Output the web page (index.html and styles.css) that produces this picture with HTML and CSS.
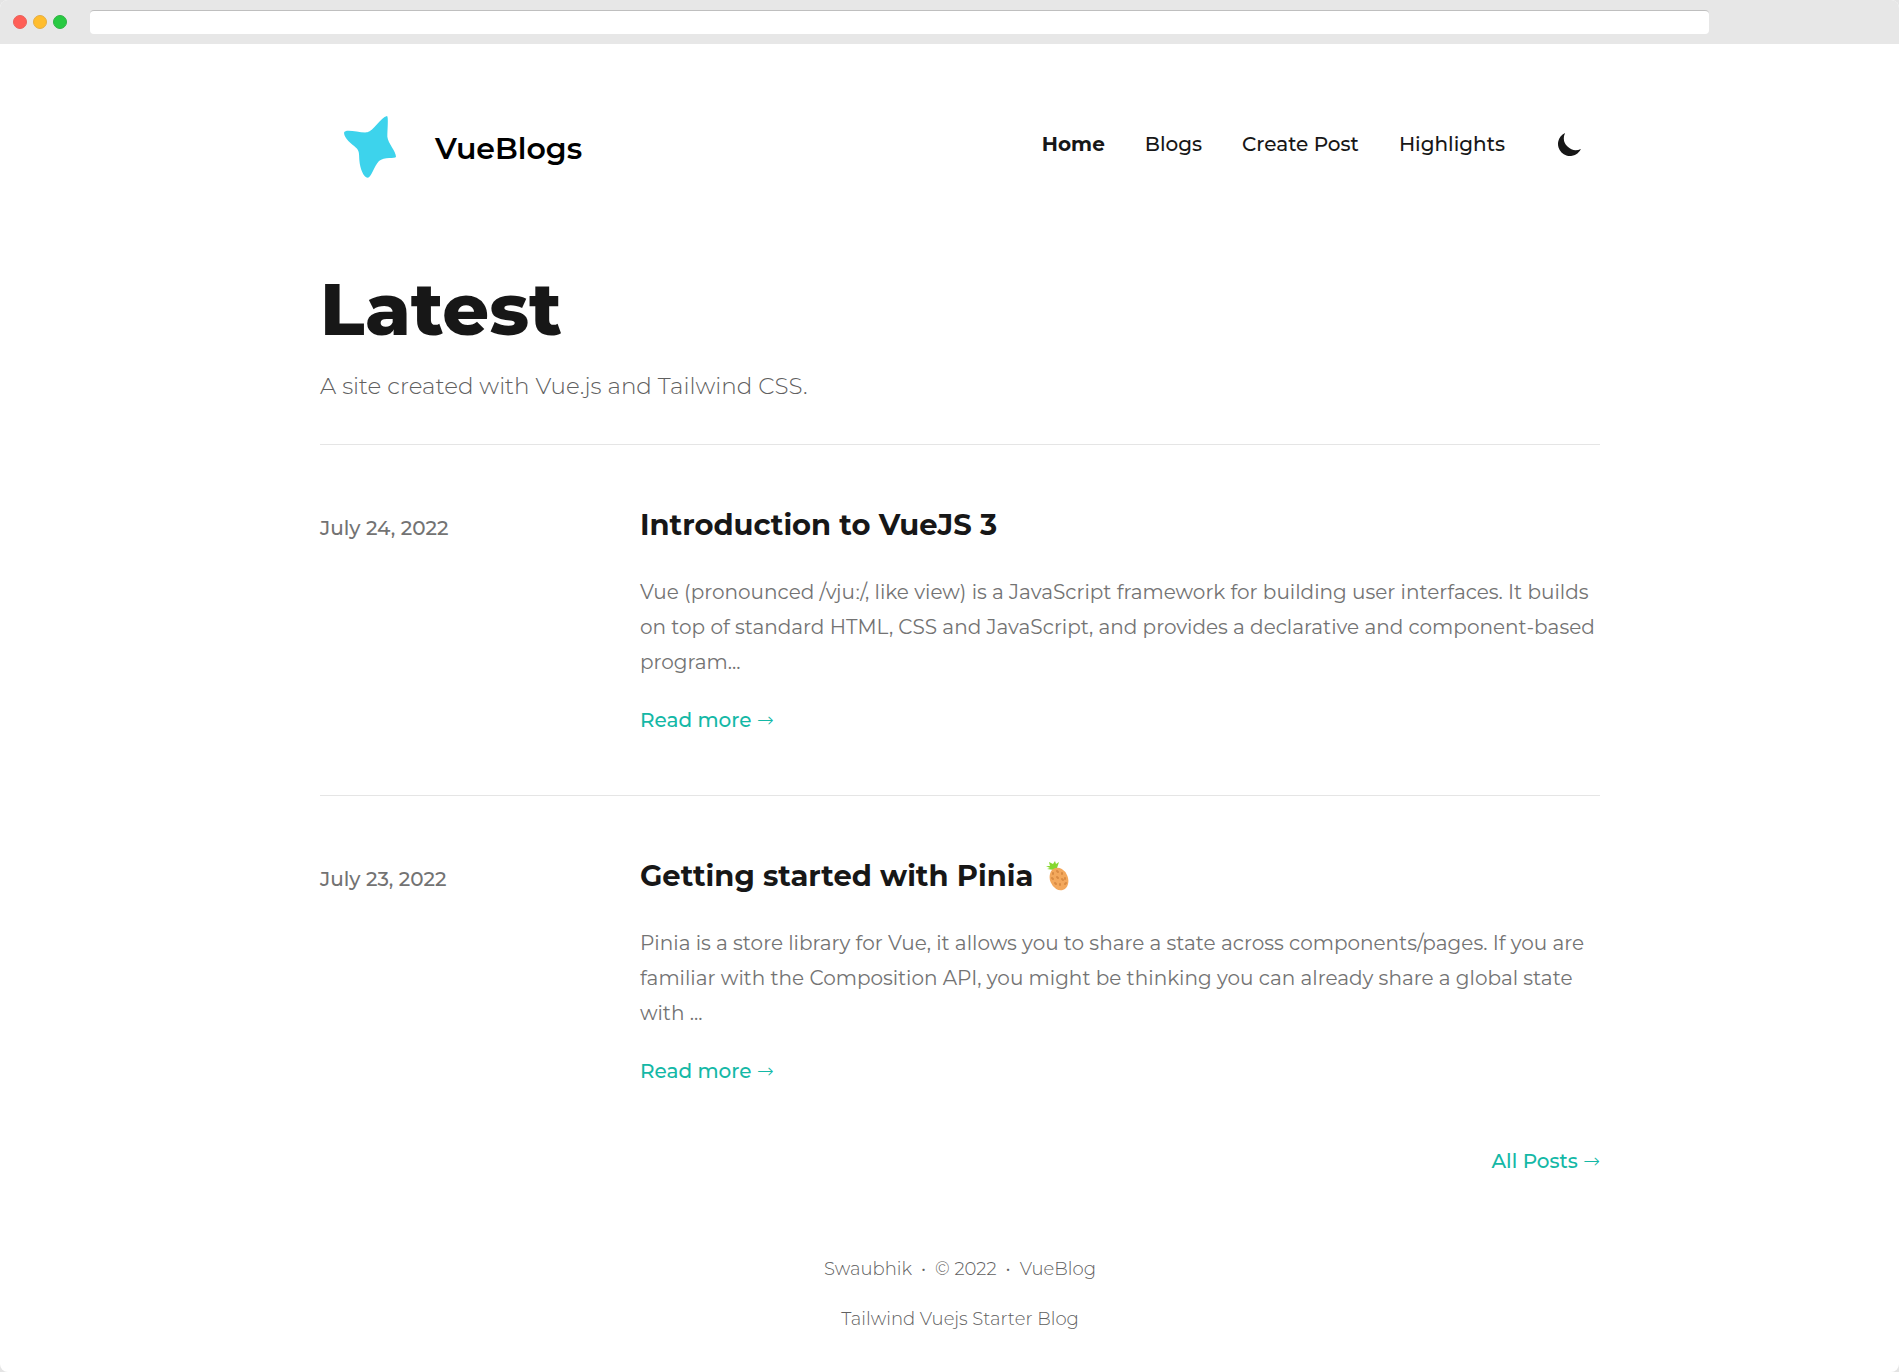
FILE: index.html
```html
<!DOCTYPE html>
<html lang="en">
<head>
<meta charset="utf-8">
<meta name="viewport" content="width=device-width, initial-scale=1">
<title>VueBlogs</title>
<link rel="stylesheet" href="styles.css">
</head>
<body>
<div class="window">
  <div class="toolbar">
    <div class="dots">
      <span class="dot dot-red"></span>
      <span class="dot dot-yellow"></span>
      <span class="dot dot-green"></span>
    </div>
    <input class="address" type="text" aria-label="Address">
  </div>
  <div class="container">
    <header class="header">
      <a class="brand" href="#">
        <svg class="brand-logo" viewBox="30 12 300 300" aria-hidden="true">
          <path fill="#3dd3ec" d="M231 78C236 80 232 120 232 140C234 160 258 184 258 200C256 207 222 199 207 213C192 228 184 263 173 263C160 262 150 235 148 210C147 190 148 182 138 173C124 160 103 146 102 128C106 114 150 130 172 127C190 123 212 82 231 78Z"/>
        </svg>
        <span class="brand-name">VueBlogs</span>
      </a>
      <div class="header-side">
        <nav class="nav">
          <a class="nav-link nav-active" href="#">Home</a>
          <a class="nav-link" href="#">Blogs</a>
          <a class="nav-link" href="#">Create Post</a>
          <a class="nav-link" href="#">Highlights</a>
        </nav>
        <button class="theme" type="button" aria-label="Toggle dark mode">
          <svg class="theme-icon" viewBox="0 0 20 20" aria-hidden="true">
            <path fill="#171717" d="M17.293 13.293A8 8 0 016.707 2.707a8.001 8.001 0 1010.586 10.586z"/>
          </svg>
        </button>
      </div>
    </header>
    <main>
      <div class="intro">
        <h1 class="intro-title">Latest</h1>
        <p class="intro-text">A site created with Vue.js and Tailwind CSS.</p>
      </div>
      <article class="post">
        <time class="post-date" datetime="2022-07-24">July 24, 2022</time>
        <div class="post-body">
          <h2 class="post-title">Introduction to VueJS 3</h2>
          <p class="post-text">Vue (pronounced /vjuː/, like view) is a JavaScript framework for building user interfaces. It builds on top of standard HTML, CSS and JavaScript, and provides a declarative and component-based program...</p>
          <a class="more" href="#">Read more <span class="arrow">→</span></a>
        </div>
      </article>
      <article class="post">
        <time class="post-date" datetime="2022-07-23">July 23, 2022</time>
        <div class="post-body">
          <h2 class="post-title">Getting started with Pinia
            <svg class="pineapple" viewBox="0 0 30 30" role="img" aria-label="pineapple">
              <path fill="#86d72f" d="M4 5L8 5L7 1L11 3L13 0L14 3L17 1L15 7L12 9L5 8L8 7Z"/>
              <ellipse cx="17" cy="18" rx="9" ry="11.5" fill="#f3a85c" transform="rotate(-22 17 18)"/>
              <path fill="none" stroke="#d98b43" stroke-width="2" stroke-linecap="round" d="M11 12v1M15 10l1 1M20 12v1M10 17l1 1M15 16l1 1M20 18l1 1M13 22l1 1M18 23v1M23 17v1M24 22l-1 1"/>
            </svg>
          </h2>
          <p class="post-text">Pinia is a store library for Vue, it allows you to share a state across components/pages. If you are familiar with the Composition API, you might be thinking you can already share a global state with ...</p>
          <a class="more" href="#">Read more <span class="arrow">→</span></a>
        </div>
      </article>
      <div class="all-posts"><a class="more" href="#">All Posts <span class="arrow">→</span></a></div>
    </main>
    <footer class="footer">
      <div class="footer-row">
        <span>Swaubhik</span><span>•</span><span>© 2022</span><span>•</span><a class="footer-link" href="#">VueBlog</a>
      </div>
      <a class="footer-link" href="#">Tailwind Vuejs Starter Blog</a>
    </footer>
  </div>
</div>
</body>
</html>
```
FILE: styles.css
```css
* { box-sizing: border-box; }
html { background: #e4e4e4; }
body {
  margin: 0;
  font-family: Montserrat, Inter, "Liberation Sans", sans-serif;
  font-size: 20px;
  line-height: 30px;
  color: #171717;
}
h1, h2, p { margin: 0; }
a { color: inherit; text-decoration: none; }

.window {
  min-height: 100vh;
  overflow: hidden;
  border-radius: 8px;
  background: #fff;
}
.toolbar {
  display: flex;
  align-items: center;
  gap: 23px;
  height: 44px;
  padding: 0 190px 0 13px;
  background: #e7e7e7;
}
.dots { display: flex; gap: 6px; }
.dot { width: 14px; height: 14px; border-radius: 50%; }
.dot-red { background: #ff5f57; border: 1px solid #e9625b; }
.dot-yellow { background: #ffbd2e; border: 1px solid #e4ae43; }
.dot-green { background: #28ca42; border: 1px solid #2fb244; }
.address {
  flex: 1;
  min-width: 0;
  height: 24px;
  padding: 0 8px;
  border: 0;
  border-top: 1px solid #bfbfbf;
  border-radius: 4px;
  background: #fff;
}

.container {
  width: 100%;
  max-width: 1301px;
  margin: 0 auto;
  padding-left: 21px;
}
.header {
  display: flex;
  align-items: center;
  justify-content: space-between;
  padding: 50px 0;
}
.brand { display: flex; align-items: center; gap: 15px; color: #000; }
.brand-logo { width: 100px; height: 100px; }
.brand-name { padding-top: 10px; font-size: 30px; font-weight: 600; line-height: 40px; }
.header-side { display: flex; align-items: center; gap: 50px; padding-right: 15px; }
.nav { display: flex; gap: 40px; font-weight: 500; }
.nav-active { font-weight: 700; }
.theme { display: block; padding: 0; border: 0; background: none; }
.theme-icon { display: block; width: 30px; height: 30px; }

.intro { padding: 30px 0 40px; border-bottom: 1px solid #e5e5e5; }
.intro-title { font-size: 73px; font-weight: 800; line-height: 70px; }
.intro-text {
  margin-top: 25px;
  font-size: 23px;
  font-weight: 300;
  line-height: 35px;
  color: #606060;
}

.post {
  display: grid;
  grid-template-columns: 1fr 3fr;
  align-items: baseline;
  padding: 60px 0;
}
.post + .post { border-top: 1px solid #e5e5e5; }
.post-date { font-weight: 500; color: #737373; }
.post-title { font-size: 29px; font-weight: 700; line-height: 40px; }
.post-text {
  margin: 30px 0 25px;
  line-height: 35px;
  color: #737373;
}
.more { display: block; font-weight: 500; color: #14b8a6; }
.arrow { font-family: "DejaVu Sans", sans-serif; font-weight: 200; line-height: 1; }
.pineapple { width: 30px; height: 30px; vertical-align: -5px; }
.all-posts { display: flex; justify-content: flex-end; }

.footer {
  display: flex;
  flex-direction: column;
  align-items: center;
  gap: 25px;
  padding: 81px 0 39px;
  font-size: 18px;
  font-weight: 300;
  line-height: 25px;
  color: #606060;
}
.footer-row { display: flex; gap: 9px; }
```
